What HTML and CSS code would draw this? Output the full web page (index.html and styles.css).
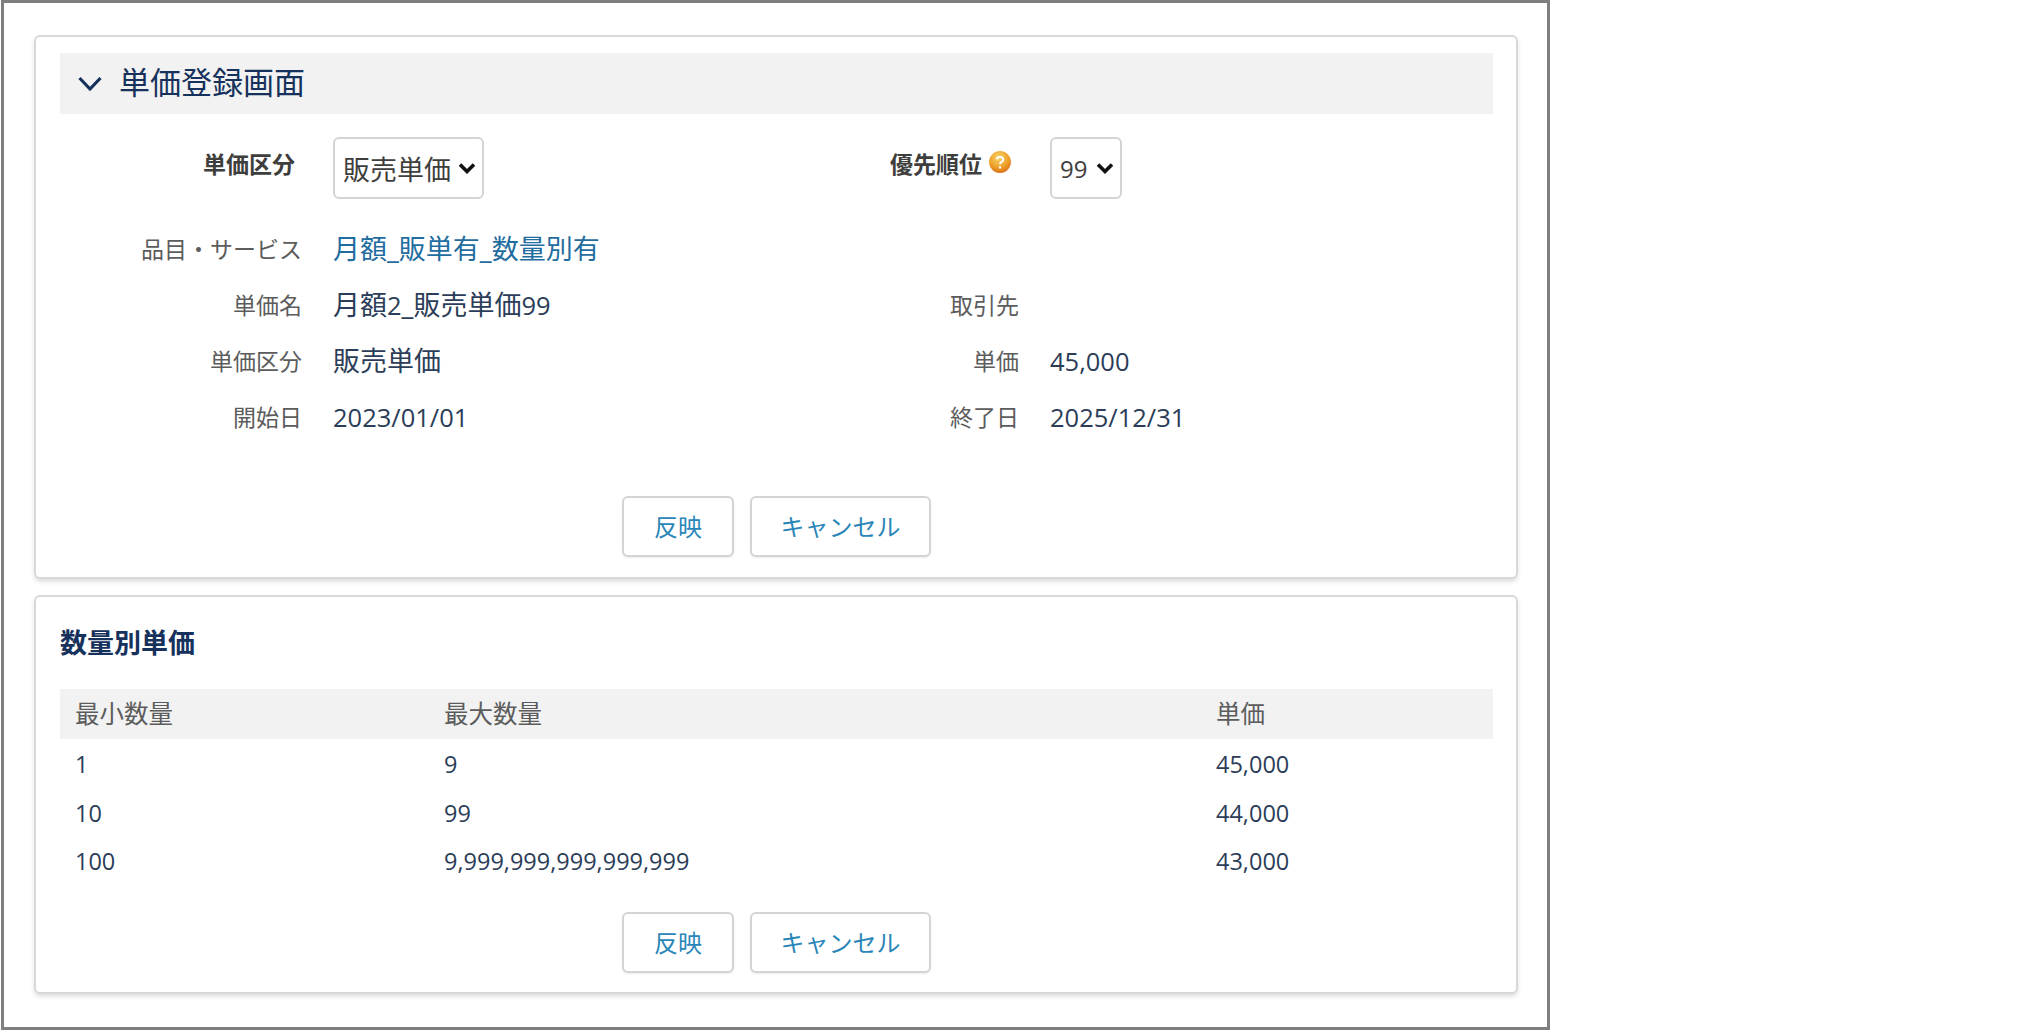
FILE: index.html
```html
<!DOCTYPE html>
<html lang="ja">
<head>
<meta charset="utf-8">
<title>単価登録画面</title>
<link rel="stylesheet" href="styles.css">
</head>
<body>
<main class="frame">
  <section class="card card-form">
    <h1 class="band">
      <svg class="chevron" width="26" height="17" viewBox="0 0 26 17" aria-hidden="true"><path d="M2.5 3 13 14 23.5 3" fill="none" stroke="#16325c" stroke-width="3.2"/></svg>
      <span>単価登録画面</span>
    </h1>
    <div class="edit-row">
      <label class="edit-label lbl-a">単価区分</label>
      <div class="fake-select sel-a"><span>販売単価</span><svg width="18" height="12" viewBox="0 0 18 12" aria-hidden="true"><path d="M2 2.5 9 9.5 16 2.5" fill="none" stroke="#111" stroke-width="3.6"/></svg></div>
      <label class="edit-label lbl-b">優先順位<svg class="help" width="24" height="24" viewBox="0 0 22 22" aria-hidden="true"><defs><radialGradient id="g" cx="45%" cy="30%" r="75%"><stop offset="0" stop-color="#f9d46a"/><stop offset=".6" stop-color="#eda12a"/><stop offset="1" stop-color="#d9660f"/></radialGradient></defs><circle cx="11" cy="11" r="10" fill="url(#g)"/><path d="M8 8.5C8.4 5.8 14 5.8 14 8.8 14 11 11 10.8 11 13M11 15v2" fill="none" stroke="#fff" stroke-width="1.8"/></svg></label>
      <div class="fake-select sel-b"><span class="num">99</span><svg width="18" height="12" viewBox="0 0 18 12" aria-hidden="true"><path d="M2 2.5 9 9.5 16 2.5" fill="none" stroke="#111" stroke-width="3.6"/></svg></div>
    </div>
    <dl class="details">
      <dt>品目・サービス</dt><dd class="wide"><a class="link" href="#">月額_販単有_数量別有</a></dd>
      <dt>単価名</dt><dd>月額<span class="num">2</span>_販売単価<span class="num">99</span></dd><dt>取引先</dt><dd></dd>
      <dt>単価区分</dt><dd>販売単価</dd><dt>単価</dt><dd><span class="num">45,000</span></dd>
      <dt>開始日</dt><dd><span class="num">2023/01/01</span></dd><dt>終了日</dt><dd><span class="num">2025/12/31</span></dd>
    </dl>
    <div class="actions"><button class="btn btn-a">反映</button><button class="btn btn-b">キャンセル</button></div>
  </section>
  <section class="card card-table">
    <h2 class="sub-title">数量別単価</h2>
    <table class="qty">
      <thead><tr><th class="c1">最小数量</th><th class="c2">最大数量</th><th>単価</th></tr></thead>
      <tbody>
        <tr><td>1</td><td>9</td><td>45,000</td></tr>
        <tr><td>10</td><td>99</td><td>44,000</td></tr>
        <tr><td>100</td><td>9,999,999,999,999,999</td><td>43,000</td></tr>
      </tbody>
    </table>
    <div class="actions"><button class="btn btn-a">反映</button><button class="btn btn-b">キャンセル</button></div>
  </section>
</main>
</body>
</html>
```
FILE: styles.css
```css
* { box-sizing: border-box; }
html, body { margin: 0; padding: 0; background: #fff; }
body {
  font-family: "Open Sans", "Noto Sans CJK JP", sans-serif;
  font-size: 24px;
  color: #2b3d58;
}
.frame {
  width: 1549px;
  height: 1030px;
  margin: 0 0 0 1px;
  border: 3px solid #7f7f7f;
  padding: 32px 29px 0 30px;
  display: flex;
  flex-direction: column;
  gap: 16px;
}
.card {
  border: 2px solid #d8d8d8;
  border-radius: 6px;
  background: #fff;
  box-shadow: 0 3px 4px rgba(0,0,0,.12);
  padding: 15px 23px 0 24px;
  flex: none;
}
.card-form { height: 544px; padding-top: 16px; }
.card-table { height: 399px; }
.band {
  margin: 0;
  height: 61px;
  background: #f2f2f2;
  display: flex;
  align-items: center;
  padding: 0 0 7px 17px;
  gap: 16px;
  font-size: 31px;
  font-weight: 400;
  color: #16325c;
}
.chevron { margin-top: 7px; }
.edit-row {
  display: flex;
  align-items: flex-start;
  margin-top: 23px;
}
.edit-label {
  font-weight: 700;
  font-size: 23px;
  color: #3e3e3c;
  line-height: 34px;
  display: flex;
  align-items: center;
  margin-top: 10px;
}
.lbl-a { width: 235px; justify-content: flex-end; }
.lbl-b { width: 528px; justify-content: flex-end; }
.help { margin-left: 6px; margin-top: -4px; }
.fake-select {
  height: 62px;
  border: 2px solid #d4d4d4;
  border-radius: 6px;
  display: flex;
  align-items: center;
  justify-content: space-between;
  padding: 0 6px 0 8px;
  color: #3e3e3c;
  font-size: 27px;
}
.sel-a { width: 151px; margin-left: 38px; }
.sel-b { width: 72px; margin-left: 38px; }
.sel-b .num { font-size: 24px; }
.details {
  margin: 22px 0 0;
  display: grid;
  grid-template-columns: 242px 475px 242px 1fr;
  grid-auto-rows: 56px;
  align-items: center;
  font-size: 27px;
  line-height: 36px;
}
.details dt {
  text-align: right;
  font-size: 23px;
  color: #5c5c5c;
}
.details dd { margin: 0 0 0 31px; }
.details .wide { grid-column: 2 / 5; }
.num { font-size: 25.5px; }
.link { color: #1f6d9f; text-decoration: none; }
.actions {
  display: flex;
  justify-content: center;
  gap: 16px;
}
.card-form .actions { margin-top: 51px; }
.card-table .actions { margin-top: 27px; }
.btn {
  height: 61px;
  border: 2px solid #d4d4d4;
  border-radius: 6px;
  background: #fff;
  font: inherit;
  color: #2a86b8;
  padding: 0 0 2px;
  box-shadow: 0 1px 2px rgba(0,0,0,.08);
}
.btn-a { width: 112px; }
.btn-b { width: 181px; }
.sub-title {
  margin: 11px 0 0;
  font-size: 27px;
  font-weight: 700;
  line-height: 40px;
  color: #16325c;
}
.qty {
  width: 100%;
  margin-top: 26px;
  border-collapse: collapse;
  table-layout: fixed;
}
.qty th {
  background: #f2f2f2;
  height: 50px;
  padding: 0 0 3px 15px;
  text-align: left;
  font-size: 24.5px;
  font-weight: 400;
  color: #5c5c5c;
}
.qty td { height: 48.5px; padding: 2px 0 0 15px; font-size: 23.5px; }
.c1 { width: 369px; }
.c2 { width: 772px; }
```
